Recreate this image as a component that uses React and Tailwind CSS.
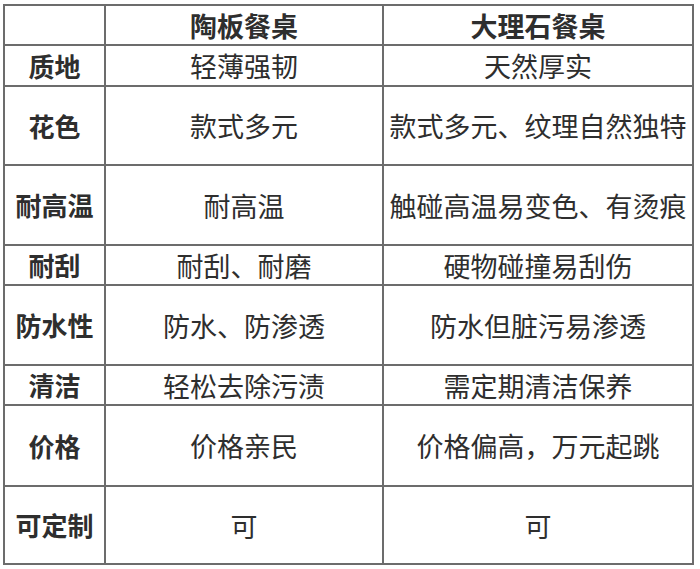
import React from "react";

const rows = [
  ["", "陶板餐桌", "大理石餐桌", "h-[38px]", true],
  ["质地", "轻薄强韧", "天然厚实", "h-[39px]"],
  ["花色", "款式多元", "款式多元、纹理自然独特", "h-[77px]"],
  ["耐高温", "耐高温", "触碰高温易变色、有烫痕", "h-[78px]"],
  ["耐刮", "耐刮、耐磨", "硬物碰撞易刮伤", "h-[38px]"],
  ["防水性", "防水、防渗透", "防水但脏污易渗透", "h-[78px]"],
  ["清洁", "轻松去除污渍", "需定期清洁保养", "h-[38px]"],
  ["价格", "价格亲民", "价格偏高，万元起跳", "h-[79px]"],
  ["可定制", "可", "可", "h-[76px]"],
];

export default function App() {
  return (
    <div className="w-[700px] h-[569px] bg-white pt-[4px] pl-[3px]" style={{ fontFamily: '"Noto Sans CJK SC", "Noto Sans", sans-serif' }}>
      <div className="inline-grid grid-cols-[99px_276px_308px] gap-[2px] p-[2px] bg-[#6c6c6c] text-[#2e2e2e] text-[27px] leading-none">
        {rows.map(([a, b, c, h, head], i) => (
          <React.Fragment key={i}>
            <div className={`${h} bg-white flex items-center justify-center font-bold text-[26px]`}>{a}</div>
            <div className={`${h} bg-white flex items-center justify-center ${head ? "font-bold" : ""}`}>{b}</div>
            <div className={`${h} bg-white flex items-center justify-center ${head ? "font-bold" : ""}`}>{c}</div>
          </React.Fragment>
        ))}
      </div>
    </div>
  );
}
